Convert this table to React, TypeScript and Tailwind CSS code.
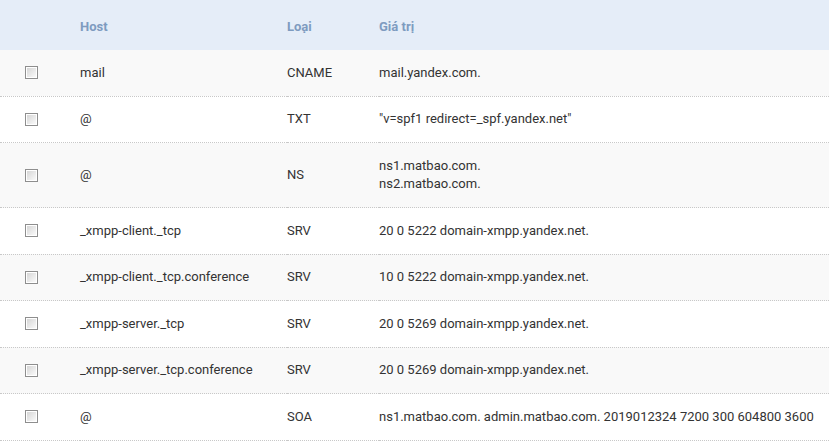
const records = [
  { host: "mail", type: "CNAME", value: ["mail.yandex.com."] },
  { host: "@", type: "TXT", value: ['"v=spf1 redirect=_spf.yandex.net"'] },
  { host: "@", type: "NS", value: ["ns1.matbao.com.", "ns2.matbao.com."] },
  { host: "_xmpp-client._tcp", type: "SRV", value: ["20 0 5222 domain-xmpp.yandex.net."] },
  { host: "_xmpp-client._tcp.conference", type: "SRV", value: ["10 0 5222 domain-xmpp.yandex.net."] },
  { host: "_xmpp-server._tcp", type: "SRV", value: ["20 0 5269 domain-xmpp.yandex.net."] },
  { host: "_xmpp-server._tcp.conference", type: "SRV", value: ["20 0 5269 domain-xmpp.yandex.net."] },
  { host: "@", type: "SOA", value: ["ns1.matbao.com. admin.matbao.com. 2019012324 7200 300 604800 3600"] },
]

function Checkbox() {
  return (
    <div className="w-[13px] h-[13px] border border-[#8e8e8e] bg-white p-px">
      <div className="w-full h-full bg-gradient-to-br from-[#d6d6d6] to-[#fafafa]" />
    </div>
  )
}

export default function App() {
  return (
    <div className="w-[829px] h-[447px] bg-white font-['Roboto',sans-serif] text-[13px] text-[#333]">
      <table className="w-full border-collapse">
        <thead>
          <tr className="bg-[#e5edf8] h-[50px] text-left font-bold text-[#7e9bc0]">
            <th className="w-[80px]" />
            <th className="w-[207px] pt-[3px] font-bold">Host</th>
            <th className="w-[92px] pt-[3px] font-bold">Loại</th>
            <th className="pt-[3px] font-bold">Giá trị</th>
          </tr>
        </thead>
        <tbody>
          {records.map((r, i) => (
            <tr
              key={i}
              className={`${i % 2 === 0 ? "bg-[#f9f9f9]" : "bg-white"} border-b border-dotted border-[#c8c8c8] leading-[18.5px]`}
            >
              <td className="pl-[25px] py-[13.5px] align-middle">
                <Checkbox />
              </td>
              <td className="py-[13.5px] align-middle">{r.host}</td>
              <td className="py-[13.5px] align-middle">{r.type}</td>
              <td className="py-[13.5px] align-middle">
                {r.value.map((v, j) => (
                  <div key={j}>{v}</div>
                ))}
              </td>
            </tr>
          ))}
        </tbody>
      </table>
    </div>
  )
}
